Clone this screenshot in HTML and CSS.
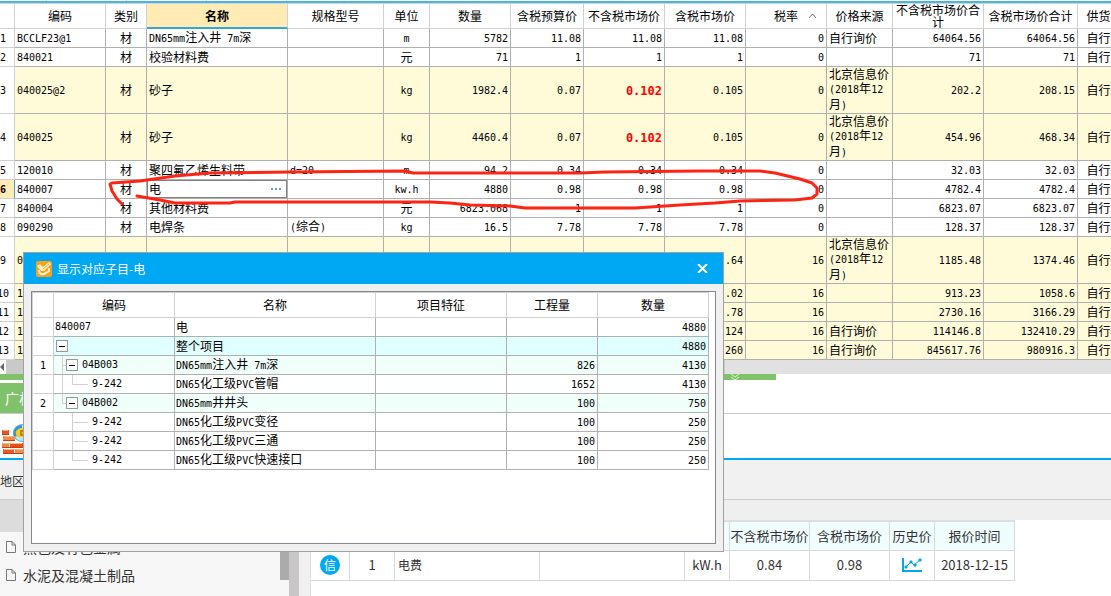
FILE: index.html
```html
<!DOCTYPE html>
<html lang="zh-CN">
<head>
<meta charset="utf-8">
<title>显示对应子目</title>
<link rel="stylesheet" href="styles.css">
</head>
<body>
<main class="app">
<section class="sheet">
<div class="ruler"><i></i><i></i><i></i><i></i></div>
<table class="grid main-grid">
<colgroup><col class="c-no"><col class="c-code"><col class="c-kind"><col class="c-name"><col class="c-spec"><col class="c-unit"><col class="c-qty"><col class="c-budget"><col class="c-price"><col class="c-price"><col class="c-price"><col class="c-src"><col class="c-sum"><col class="c-total"><col class="c-supply"></colgroup>
<thead>
<tr><th></th><th>编码</th><th>类别</th><th class="active">名称</th><th>规格型号</th><th>单位</th><th>数量</th><th>含税预算价</th><th>不含税市场价</th><th>含税市场价</th><th class="sorted">税率<svg class="caret" viewBox="0 0 9 6"><path d="M1 5L4.500 1L8 5" /></svg></th><th>价格来源</th><th class="tall">不含税市场价合计</th><th>含税市场价合计</th><th>供货方式</th></tr>
</thead>
<tbody>
<tr><th>1</th><td class="n">BCCLF23@1</td><td class="c">材</td><td><span class="n">DN65mm</span>注入井<span class="n"> 7m</span>深</td><td></td><td class="n c">m</td><td class="n r">5782</td><td class="n r">11.08</td><td class="n r">11.08</td><td class="n r">11.08</td><td class="n r">0</td><td>自行询价</td><td class="n r">64064.56</td><td class="n r">64064.56</td><td class="c">自行采购</td></tr>
<tr><th>2</th><td class="n">840021</td><td class="c">材</td><td>校验材料费</td><td></td><td class="c">元</td><td class="n r">71</td><td class="n r">1</td><td class="n r">1</td><td class="n r">1</td><td class="n r">0</td><td></td><td class="n r">71</td><td class="n r">71</td><td class="c">自行采购</td></tr>
<tr class="hl big"><th>3</th><td class="n">040025@2</td><td class="c">材</td><td>砂子</td><td></td><td class="n c">kg</td><td class="n r">1982.4</td><td class="n r">0.07</td><td class="n r warn">0.102</td><td class="n r">0.105</td><td class="n r">0</td><td>北京信息价<br><span class="n">(2018</span>年<span class="n">12</span><br>月<span class="n">)</span></td><td class="n r">202.2</td><td class="n r">208.15</td><td class="c">自行采购</td></tr>
<tr class="hl big"><th>4</th><td class="n">040025</td><td class="c">材</td><td>砂子</td><td></td><td class="n c">kg</td><td class="n r">4460.4</td><td class="n r">0.07</td><td class="n r warn">0.102</td><td class="n r">0.105</td><td class="n r">0</td><td>北京信息价<br><span class="n">(2018</span>年<span class="n">12</span><br>月<span class="n">)</span></td><td class="n r">454.96</td><td class="n r">468.34</td><td class="c">自行采购</td></tr>
<tr><th>5</th><td class="n">120010</td><td class="c">材</td><td>聚四氟乙烯生料带</td><td class="n">d=20</td><td class="n c">m</td><td class="n r">94.2</td><td class="n r">0.34</td><td class="n r">0.34</td><td class="n r">0.34</td><td class="n r">0</td><td></td><td class="n r">32.03</td><td class="n r">32.03</td><td class="c">自行采购</td></tr>
<tr class="current"><th>6</th><td class="n">840007</td><td class="c">材</td><td class="edit"><div class="editor"><input aria-label="名称" value="电" size="4"><button type="button" aria-label="更多"><i></i><i></i><i></i></button></div></td><td></td><td class="n c">kw.h</td><td class="n r">4880</td><td class="n r">0.98</td><td class="n r">0.98</td><td class="n r">0.98</td><td class="n r">0</td><td></td><td class="n r">4782.4</td><td class="n r">4782.4</td><td class="c">自行采购</td></tr>
<tr><th>7</th><td class="n">840004</td><td class="c">材</td><td>其他材料费</td><td></td><td class="c">元</td><td class="n r">6823.068</td><td class="n r">1</td><td class="n r">1</td><td class="n r">1</td><td class="n r">0</td><td></td><td class="n r">6823.07</td><td class="n r">6823.07</td><td class="c">自行采购</td></tr>
<tr><th>8</th><td class="n">090290</td><td class="c">材</td><td>电焊条</td><td><span class="n">(</span>综合<span class="n">)</span></td><td class="n c">kg</td><td class="n r">16.5</td><td class="n r">7.78</td><td class="n r">7.78</td><td class="n r">7.78</td><td class="n r">0</td><td></td><td class="n r">128.37</td><td class="n r">128.37</td><td class="c">自行采购</td></tr>
<tr class="hl big"><th>9</th><td class="n">0</td><td></td><td></td><td></td><td></td><td></td><td></td><td></td><td class="n r">.64</td><td class="n r">16</td><td>北京信息价<br><span class="n">(2018</span>年<span class="n">12</span><br>月<span class="n">)</span></td><td class="n r">1185.48</td><td class="n r">1374.46</td><td class="c">自行采购</td></tr>
<tr class="hl"><th>10</th><td class="n">1</td><td></td><td></td><td></td><td></td><td></td><td></td><td></td><td class="n r">.02</td><td class="n r">16</td><td></td><td class="n r">913.23</td><td class="n r">1058.6</td><td class="c">自行采购</td></tr>
<tr class="hl"><th>11</th><td class="n">1</td><td></td><td></td><td></td><td></td><td></td><td></td><td></td><td class="n r">.78</td><td class="n r">16</td><td></td><td class="n r">2730.16</td><td class="n r">3166.29</td><td class="c">自行采购</td></tr>
<tr class="hl"><th>12</th><td class="n">1</td><td></td><td></td><td></td><td></td><td></td><td></td><td></td><td class="n r">124</td><td class="n r">16</td><td>自行询价</td><td class="n r">114146.8</td><td class="n r">132410.29</td><td class="c">自行采购</td></tr>
<tr class="hl"><th>13</th><td class="n">1</td><td></td><td></td><td></td><td></td><td></td><td></td><td></td><td class="n r">260</td><td class="n r">16</td><td>自行询价</td><td class="n r">845617.76</td><td class="n r">980916.3</td><td class="c">自行采购</td></tr>
</tbody>
</table>
<div class="hscroll"><span class="arrow"><svg viewBox="0 0 4 8"><path d="M4 0V8L0 4Z"/></svg></span><span class="thumb"></span></div>
<svg class="ink" viewBox="0 0 1111 240"><path d="M122 204L117 199L112 191L110 184L112 183L140 181L175 176L210 173L290 172L405 171L413 173H580L605 172L700 171H760L775 173L800 179L812 183L817 188V194L812 198L795 200L740 201L715 203L680 205L635 208H525L510 206L470 205L450 203L430 202H235L230 203H175L160 200L137 196"/></svg>
</section>

<div class="splitter"><span><svg viewBox="0 0 10 6"><path d="M1 0L5 3L9 0M1 3L5 6L9 3"/></svg></span></div>
<nav class="tabs"><a href="#price">广材信息服务</a></nav>
<div class="tools">
<svg class="bricks" viewBox="0 0 30 32">
<circle cx="20" cy="10" r="9" fill="#55b9ed"/><circle cx="20" cy="10" r="8" fill="#bce6fb"/>
<path d="M12 14C10 7 14 2 20 2V5C16 5 14 9 15 13Z" fill="#2f95d8"/>
<path d="M14 8Q18 3 25 6V14H16Q13 12 14 8Z" fill="#ffc91c"/><path d="M24 8H19V12H24V10H21" fill="none" stroke="#aa7500" stroke-width="1.500"/>
<path d="M0 7H7V12H0Z" fill="#ee5120"/><path d="M1 13H13V18H1Z" fill="#f28a49"/><path d="M0 20H7V25H0Z" fill="#f28742"/><path d="M8 20H21V25H8Z" fill="#f04a17"/><path d="M1 26H12V31H1Z" fill="#ee5923"/><path d="M13 26H26V31H13Z" fill="#f29047"/>
<path d="M0 11.500H7M1 17.500H13M0 24.500H21M1 30.500H25" stroke="#bb4217"/><path d="M1 7.500H6M2 13.500H12M1 20.500H20M2 26.500H25" stroke="#ffb181"/>
</svg>
</div>
<div class="filters">地区</div>

<div class="lower">
<aside class="side">
<div class="side-head"></div>
<ul>
<li><svg viewBox="0 0 10 12"><path d="M.5 .5H6L9.500 4V11.500H.5ZM6 .5V4H9.500"/></svg><a href="#metal">黑色及有色金属</a></li>
<li><svg viewBox="0 0 10 12"><path d="M.5 .5H6L9.500 4V11.500H.5ZM6 .5V4H9.500"/></svg><a href="#cement">水泥及混凝土制品</a></li>
</ul>
<span class="vthumb"></span>
</aside>
<div class="divider"></div>
<section class="quotes">
<div class="quotes-bar"></div>
<table class="quote-grid">
<colgroup><col class="q-tag"><col class="q-unit"><col class="q-name"><col class="q-name"><col class="q-unit"><col class="q-price"><col class="q-price"><col class="q-unit"><col class="q-date"></colgroup>
<thead><tr><th></th><th></th><th></th><th></th><th></th><th>不含税市场价</th><th>含税市场价</th><th>历史价</th><th>报价时间</th></tr></thead>
<tbody><tr><td><span class="tag">信</span></td><td>1</td><td class="left">电费</td><td></td><td>kW.h</td><td>0.84</td><td>0.98</td><td><svg class="chart" viewBox="0 0 20 14"><path d="M1 0V13H20"/><path class="trend" d="M4 9L9 4L12 7L18 2"/><path class="dots" d="M3 8h2v2H3ZM8 3h2v2H8ZM12 6h2v2H12ZM17 1h2v2H17Z"/></svg></td><td>2018-12-15</td></tr></tbody>
</table>
</section>
</div>

<section class="dialog" role="dialog" aria-labelledby="dlg-title">
<header>
<svg class="logo" viewBox="0 0 16 16"><rect width="16" height="16" rx="2" fill="#faa019"/><path d="M1 5L4 3L7 6L13 1L15 3L8 10L5 10Z" fill="#fff3cf"/><path d="M3 9Q3 14 8 13L13 10V7" fill="none" stroke="#fff5d8" stroke-width="2"/><path d="M7 8L13 3" stroke="#f8a829"/></svg>
<h1 id="dlg-title">显示对应子目-电</h1>
<button type="button" class="close" aria-label="关闭"><svg viewBox="0 0 11 9"><path d="M1 0L10 9M10 0L1 9"/></svg></button>
</header>
<div class="panel">
<table class="grid sub-grid">
<colgroup><col class="s-no"><col class="s-code"><col class="s-name"><col class="s-feat"><col class="s-eng"><col class="s-qty"></colgroup>
<thead><tr><th></th><th>编码</th><th>名称</th><th>项目特征</th><th>工程量</th><th>数量</th></tr></thead>
<tbody>
<tr><th></th><td class="n">840007</td><td>电</td><td></td><td></td><td class="n r">4880</td></tr>
<tr class="lv0"><th></th><td class="n"><div class="tree root"><button type="button" class="toggle" aria-label="折叠"></button></div></td><td>整个项目</td><td></td><td></td><td class="n r">4880</td></tr>
<tr class="lv1"><th>1</th><td class="n"><div class="tree"><svg width="12" height="18"><path d="M8.500 0V19M8 9.500H12"/></svg><button type="button" class="toggle" aria-label="折叠"></button><span>04B003</span></div></td><td><span class="n">DN65mm</span>注入井<span class="n"> 7m</span>深</td><td></td><td class="n r">826</td><td class="n r">4130</td></tr>
<tr><th></th><td class="n"><div class="tree"><svg width="34" height="18"><path d="M8.500 0V19M18.500 0V9.500H34"/></svg><span>9-242</span></div></td><td><span class="n">DN65</span>化工级<span class="n">PVC</span>管帽</td><td></td><td class="n r">1652</td><td class="n r">4130</td></tr>
<tr class="lv1"><th>2</th><td class="n"><div class="tree"><svg width="12" height="18"><path d="M8.500 0V9.500H12"/></svg><button type="button" class="toggle" aria-label="折叠"></button><span>04B002</span></div></td><td><span class="n">DN65mm</span>井井头</td><td></td><td class="n r">100</td><td class="n r">750</td></tr>
<tr><th></th><td class="n"><div class="tree"><svg width="34" height="18"><path d="M18.500 0V19M18 9.500H34"/></svg><span>9-242</span></div></td><td><span class="n">DN65</span>化工级<span class="n">PVC</span>变径</td><td></td><td class="n r">100</td><td class="n r">250</td></tr>
<tr><th></th><td class="n"><div class="tree"><svg width="34" height="18"><path d="M18.500 0V19M18 9.500H34"/></svg><span>9-242</span></div></td><td><span class="n">DN65</span>化工级<span class="n">PVC</span>三通</td><td></td><td class="n r">100</td><td class="n r">250</td></tr>
<tr><th></th><td class="n"><div class="tree"><svg width="34" height="18"><path d="M18.500 0V9.500H34"/></svg><span>9-242</span></div></td><td><span class="n">DN65</span>化工级<span class="n">PVC</span>快速接口</td><td></td><td class="n r">100</td><td class="n r">250</td></tr>
</tbody>
</table>
</div>
</section>
</main>
</body>
</html>
```
FILE: styles.css
```css
* { box-sizing: border-box; }
html, body { height: 100%; }
body {
  margin: 0;
  overflow: hidden;
  background: #fff;
  color: #000;
  font: 12px/14px "Noto Sans CJK SC", sans-serif;
}
button, input { font: inherit; color: inherit; padding: 0; border: 0; background: none; }
a { color: inherit; text-decoration: none; }
svg { display: block; fill: none; }

.app { position: relative; display: flex; flex-direction: column; min-height: 100%; overflow: hidden; }
.sheet { position: relative; overflow: hidden; }
.ruler { display: flex; height: 4px; border-bottom: 1px solid #d4d4d4; box-shadow: inset 0 -2px #45b7e2; padding-bottom: 2px; }
.ruler i { width: 80px; border-right: 1px solid #d0d0d0; }
.ruler i:first-child { width: 47px; }

/* data grids */
.grid { table-layout: fixed; border-collapse: separate; border-spacing: 0; }
.grid th, .grid td {
  height: 19px;
  padding: 0 2px;
  overflow: hidden;
  white-space: pre;
  text-align: left;
  font-weight: 400;
  border-right: 1px solid #b0b0b0;
  border-bottom: 1px solid #b0b0b0;
}
.grid th { text-align: center; background: #fff; border-color: #d0d0d0; }
.grid tbody th, .n { font-family: "DejaVu Sans Mono", "Noto Sans CJK SC", monospace; font-size: 10px; }
.grid .n { line-height: 14px; }
.grid td.c { text-align: center; }
.grid td.r { text-align: right; }

.main-grid { width: 1152px; margin-left: -8px; }
.main-grid thead th { height: 25px; }
.grid thead .tall { white-space: normal; line-height: 12px; padding: 0; }
.grid thead .active { background: #ffebb3; font-weight: 700; border-bottom: 2px solid #36a6d6; }
.grid tbody th { padding: 1px 1px 0; }
.grid td.n { padding-top: 1px; }
.main-grid .big td { height: 47px; }
.main-grid .hl td { background: #fffbd8; }
.grid td.warn { color: #f00; font-weight: 700; font-size: 12px; }
.sorted { position: relative; }
.caret { position: absolute; right: 9px; top: 9px; width: 9px; height: 6px; stroke: #777; }
.main-grid .current th { background: #ffebb3; font-weight: 700; border-right-color: #36a6d6; }
.grid td.edit { padding: 0; }
.editor { display: flex; justify-content: space-between; height: 18px; outline: 2px solid #808080; outline-offset: -1px; padding: 0 6px 0 2px; }
.editor input { flex: 1; min-width: 0; outline: none; }
.editor button { display: flex; gap: 2px; align-items: center; }
.editor i { width: 2px; height: 2px; background: #5b9fcc; }
.c-no { width: 23px; } .c-code { width: 91px; } .c-kind { width: 41px; } .c-name { width: 141px; }
.c-spec { width: 96px; } .c-unit { width: 46px; } .c-qty { width: 81px; } .c-budget { width: 73px; }
.c-price { width: 81px; } .c-src { width: 66px; } .c-sum { width: 91px; } .c-total { width: 94px; } .c-supply { width: 66px; }

.hscroll { display: flex; height: 14px; background: #e1e1e1; }
.arrow { width: 6px; padding: 3px 0; background: #fff; }
.arrow svg { width: 4px; height: 8px; fill: #666; }
.thumb { width: 719px; background: #c9c9c9; }
.ink { position: absolute; left: 0; top: 0; width: 1111px; height: 240px; pointer-events: none; stroke: #ff2313; stroke-width: 3; stroke-linecap: round; stroke-linejoin: round; }

/* lower information area */
.splitter { height: 9px; }
.splitter span { display: flex; justify-content: flex-end; width: 776px; height: 6px; padding-right: 36px; background: #80c269; }
.splitter svg { width: 10px; height: 6px; stroke: #dff3d7; }
.tabs { display: flex; border-bottom: 1px solid #ccc; }
.tabs a { padding: 8px 5px; background: #80c269; color: #fff; font-size: 14px; }
.tools { height: 46px; padding: 9px 2px 0; border-bottom: 2px solid #00a8f0; }
.bricks { width: 30px; height: 32px; }
.filters { padding: 14px 0 11px; background: #f1f1f1; color: #333; border-bottom: 1px solid #ccc; }
.lower { display: flex; flex: 1; }
.side { position: relative; width: 289px; background: #f7f7f7; color: #333; font-size: 14px; }
.side-head { height: 32px; background: #dcdcdc; }
.side ul { margin: 0; padding: 1px 0; list-style: none; }
.side li { display: flex; align-items: center; gap: 7px; height: 28px; padding-left: 6px; }
.side li svg { width: 10px; height: 12px; stroke: #777; }
.vthumb { position: absolute; right: 0; top: 0; width: 9px; height: 80px; background: #ababab; }
.divider { width: 22px; border-left: 10px solid #c8c6c6; background: #f0f0f0; border-right: 1px solid #dcdcdc; }
.quotes { flex: 1; min-width: 0; }
.quotes-bar { height: 20px; background: #efefef; }
.quote-grid { width: 704px; table-layout: fixed; border-collapse: separate; border-spacing: 0; font-size: 13px; color: #333; }
.quote-grid th, .quote-grid td { height: 30px; padding: 0; font-weight: 400; text-align: center; white-space: nowrap; border-right: 1px solid #d8d8d8; border-bottom: 1px solid #d8d8d8; }
.quote-grid th { height: 31px; background: #f0fdff; border-top: 2px solid #dcdfe0; }
.quote-grid td { padding-bottom: 2px; }
.quote-grid .left { text-align: left; padding-left: 3px; font-size: 12px; }
.q-tag { width: 39px; } .q-unit { width: 45px; } .q-name { width: 145px; } .q-price { width: 80px; } .q-date { width: 80px; }
.tag { display: block; width: 20px; margin: 0 auto; line-height: 20px; border-radius: 50%; background: #00a8f0; color: #fff; font-size: 12px; }
.chart { width: 20px; height: 14px; margin: 0 auto; stroke: #00a8f0; stroke-width: 2; }
.chart .trend { stroke-width: 1; }
.chart .dots { fill: #00a8f0; stroke-width: 1; }

/* floating dialog */
.dialog { position: absolute; left: 23px; top: 252px; width: 701px; background: #f0f0f0; border: 1px solid #a0a0a0; }
.dialog header { display: flex; align-items: center; gap: 5px; height: 31px; padding: 0 15px 0 12px; background: #00a8f3; color: #fff; }
.dialog h1 { margin: 0; font-size: 12px; font-weight: 400; }
.logo { width: 16px; height: 16px; }
.close { margin-left: auto; }
.close svg { width: 11px; height: 9px; stroke: #fff; stroke-width: 2; }
.panel { margin: 7px; padding-bottom: 73px; border: 1px solid #828790; background: #fff; }
.sub-grid { width: 677px; border-top: 1px solid #d0d0d0; border-left: 1px solid #d0d0d0; }
.sub-grid thead th { height: 25px; }
.s-no { width: 21px; } .s-code { width: 121px; } .s-name { width: 201px; } .s-feat { width: 131px; } .s-eng { width: 91px; } .s-qty { width: 111px; }
.lv0 td { background: #e0ffff; }
.lv1 td { background: #f0fffa; }
.sub-grid td { padding: 0 2px 0 1px; }
.sub-grid td.n:nth-child(2) { padding-top: 0; }
.tree { display: flex; align-items: center; height: 18px; margin-left: -1px; }
.tree svg { overflow: visible; stroke: #d0d0d0; }
.root { padding-left: 2px; }
.toggle { width: 12px; height: 12px; border: 1px solid #999; background: linear-gradient(#000, #000) center / 6px 1px no-repeat #fff; }
.tree span { padding-left: 4px; }
```
